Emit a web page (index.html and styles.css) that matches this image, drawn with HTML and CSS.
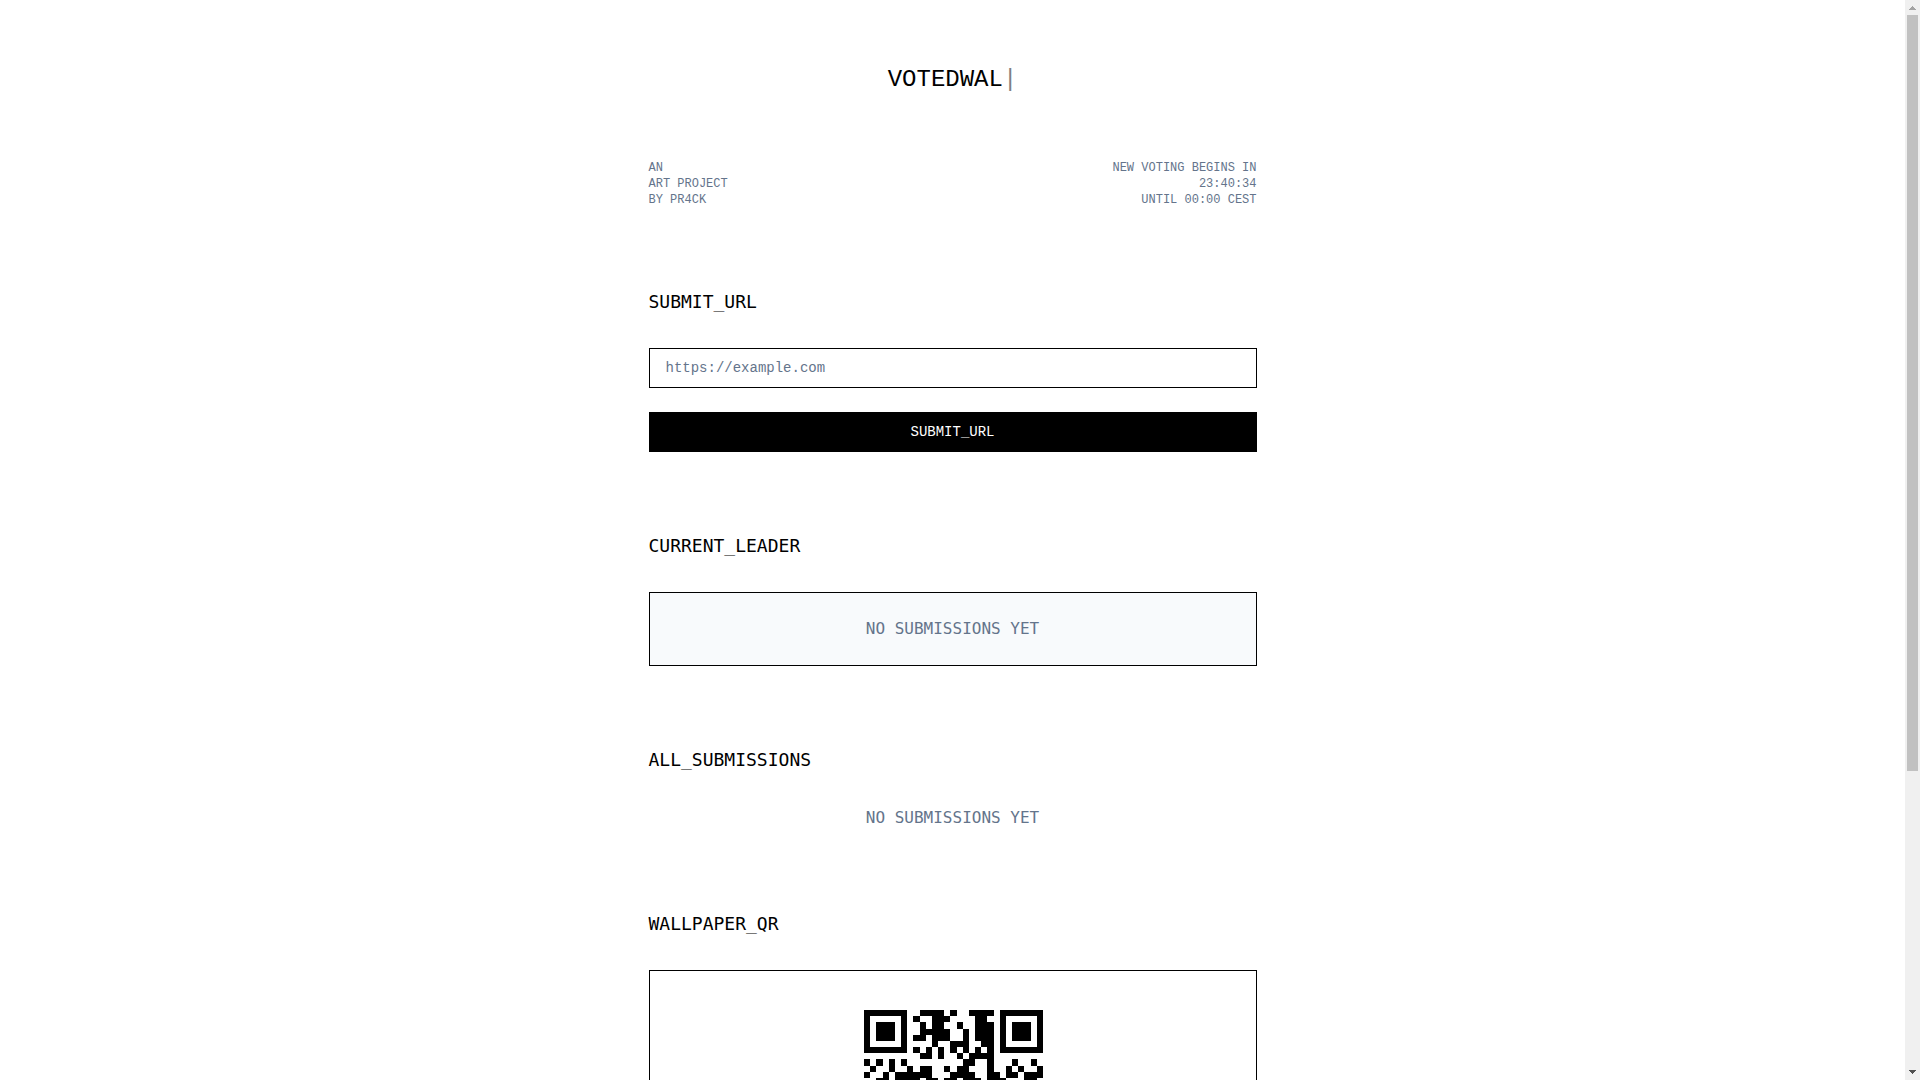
FILE: index.html
```html
<!DOCTYPE html>
<html lang="en">
<head>
<meta charset="utf-8">
<meta name="viewport" content="width=device-width, initial-scale=1">
<title>VOTEDWALL</title>
<link rel="stylesheet" href="styles.css">
</head>
<body>
<div class="scroller">
<div class="page">
  <h1 class="title">VOTEDWAL<span class="cursor">|</span></h1>
  <header class="info">
    <p>AN<br>ART PROJECT<br>BY PR4CK</p>
    <p class="info-right">NEW VOTING BEGINS IN<br>23:40:34<br>UNTIL 00:00 CEST</p>
  </header>
  <main class="sections">
    <section class="section">
      <h2 class="heading" id="submit-heading">SUBMIT_URL</h2>
      <form class="form">
        <input class="field" type="url" placeholder="https://example.com" aria-labelledby="submit-heading">
        <button class="button" type="button">SUBMIT_URL</button>
      </form>
    </section>
    <section class="section">
      <h2 class="heading">CURRENT_LEADER</h2>
      <div class="card card-leader"><p class="empty">NO SUBMISSIONS YET</p></div>
    </section>
    <section class="section">
      <h2 class="heading">ALL_SUBMISSIONS</h2>
      <p class="empty">NO SUBMISSIONS YET</p>
    </section>
    <section class="section">
      <h2 class="heading">WALLPAPER_QR</h2>
      <div class="card card-qr">
        <svg class="qr" viewBox="-1.15 -1.15 31.15 31.15" role="img" aria-label="Wallpaper QR code" shape-rendering="crispEdges">
          <path fill-rule="evenodd" d="M0 0h7v7h-7zM1 1v5h5v-5zM2 2h3v3h-3zM22 0h7v7h-7zM23 1v5h5v-5zM24 2h3v3h-3zM0 22h7v7h-7zM1 23v5h5v-5zM2 24h3v3h-3z"/>
          <path d="M9 0h4v1h-4zM14 0h1v1h-1zM17 0h4v1h-4z
            M8 1h1v1h-1zM11 1h3v1h-3zM18 1h2v1h-2z
            M9 2h1v1h-1zM11 2h2v1h-2zM15 2h1v1h-1zM18 2h3v1h-3z
            M9 3h5v1h-5zM16 3h1v1h-1zM18 3h3v1h-3z
            M8 4h2v1h-2zM11 4h3v1h-3zM16 4h1v1h-1zM18 4h3v1h-3z
            M11 5h1v1h-1zM14 5h3v1h-3zM19 5h2v1h-2z
            M8 6h1v1h-1zM10 6h1v1h-1zM12 6h1v1h-1zM14 6h1v1h-1zM16 6h1v1h-1zM18 6h1v1h-1zM20 6h1v1h-1z
            M9 7h2v1h-2zM12 7h1v1h-1zM15 7h1v1h-1zM17 7h4v1h-4z
            M0 8h1v1h-1zM2 8h1v1h-1zM4 8h1v1h-1zM6 8h1v1h-1zM16 8h2v1h-2zM20 8h1v1h-1zM24 8h1v1h-1zM27 8h1v1h-1z
            M1 9h1v1h-1zM4 9h1v1h-1zM7 9h1v1h-1zM9 9h2v1h-2zM13 9h1v1h-1zM15 9h2v1h-2zM20 9h1v1h-1zM23 9h1v1h-1zM25 9h1v1h-1zM28 9h1v1h-1z
            M0 10h1v1h-1zM3 10h1v1h-1zM5 10h6v1h-6zM14 10h4v1h-4zM20 10h2v1h-2zM23 10h2v1h-2zM26 10h3v1h-3z
            M2 11h2v1h-2zM5 11h4v1h-4zM10 11h2v1h-2zM13 11h2v1h-2zM16 11h3v1h-3zM20 11h3v1h-3zM26 11h2v1h-2z
            M1 13h3v1h-3zM6 13h2v1h-2zM11 13h4v1h-4zM18 13h2v1h-2zM23 13h4v1h-4z
            M0 15h2v1h-2zM4 15h3v2h-3zM9 15h2v2h-2zM14 15h3v1h-3zM20 15h5v1h-5z
            M2 18h4v1h-4zM8 18h5v1h-5zM15 18h2v2h-2zM21 18h2v1h-2zM26 18h3v1h-3z
            M9 21h3v1h-3zM14 21h2v3h-2zM20 20h5v1h-5zM20 24h5v1h-5zM20 21h1v3h-1zM24 21h1v3h-1zM22 22h1v1h-1z
            M8 24h4v1h-4zM10 26h3v2h-3zM16 26h3v1h-3zM22 27h4v1h-4z"/>
        </svg>
      </div>
    </section>
  </main>
</div>
</div>
<div class="scrollbar" aria-hidden="true">
  <svg class="arrow arrow-up" viewBox="0 0 15 15" shape-rendering="crispEdges"><path d="M7 6h1v1h1v1h1v1h1v1h-7v-1h1v-1h1v-1h1z"/></svg>
  <div class="track"><div class="thumb"></div></div>
  <svg class="arrow arrow-down" viewBox="0 0 15 15" shape-rendering="crispEdges"><path d="M4 5h7v1h-1v1h-1v1h-1v1h-1v-1h-1v-1h-1v-1h-1z"/></svg>
</div>
</body>
</html>
```
FILE: styles.css
```css
* { box-sizing: border-box; margin: 0; }

body {
  display: flex;
  height: 100vh;
  background: #fff;
  color: #000;
  font-family: "DejaVu Sans Mono", monospace;
  font-size: 16px;
  line-height: 24px;
}

.scroller {
  flex: 1;
  min-width: 0;
  overflow-y: auto;
  scrollbar-width: none;
}

.scrollbar {
  display: flex;
  flex-direction: column;
  flex: none;
  width: 15px;
  background: #f0f0f0;
}

.arrow { display: block; flex: none; width: 15px; height: 15px; }
.arrow-up { fill: #a3a3a3; }
.arrow-down { fill: #505050; }

.track { flex: 1; padding: 0 2px; }
.thumb { height: 72%; background: #c1c1c1; }

.page {
  max-width: 640px;
  margin: 0 auto;
  padding: 64px 16px 240px;
}

.title {
  font-family: "Liberation Mono", monospace;
  font-size: 24px;
  font-weight: 400;
  line-height: 32px;
  text-align: center;
}

.cursor { opacity: 0.5; }

.info {
  display: flex;
  justify-content: space-between;
  margin: 64px 0 80px;
  color: #64748b;
  font-family: "Liberation Mono", monospace;
  font-size: 12px;
  line-height: 16px;
}

.info-right { text-align: right; }

.sections {
  display: flex;
  flex-direction: column;
  gap: 80px;
}

.heading {
  margin-bottom: 32px;
  font-size: 18px;
  font-weight: 400;
  line-height: 28px;
}

.form {
  display: flex;
  flex-direction: column;
  gap: 24px;
}

.field,
.button {
  width: 100%;
  height: 40px;
  padding: 8px 16px;
  border: 1px solid #000;
  border-radius: 0;
  font-family: "Liberation Mono", monospace;
  font-size: 14px;
  line-height: 20px;
}

.field { background: #fff; color: #000; }
.field::placeholder { color: #64748b; opacity: 1; }

.button { background: #000; color: #fff; cursor: pointer; }

.card { border: 1px solid #000; }
.card-leader { padding: 24px; background: #f8fafc; }
.card-qr { padding: 32px; }

.empty { color: #64748b; text-align: center; }

.qr {
  display: block;
  width: 192px;
  height: 192px;
  margin: 0 auto;
}
```
